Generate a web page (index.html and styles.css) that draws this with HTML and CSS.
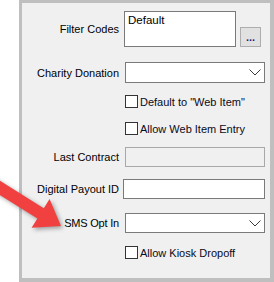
FILE: index.html
```html
<!DOCTYPE html>
<html>
<head>
<meta charset="utf-8">
<link rel="stylesheet" href="styles.css">
</head>
<body>
<div class="panel">
  <div class="form">
    <div class="row r1">
      <span class="lbl">Filter Codes</span>
      <div class="field filter-field">
        <div class="textarea">Default</div>
        <button class="ellipsis">...</button>
      </div>
    </div>
    <div class="row r2">
      <span class="lbl">Charity Donation</span>
      <div class="field combo"><svg class="chev" width="12" height="7" viewBox="0 0 12 7"><polyline points="0.5,0.5 6,6 11.5,0.5" fill="none" stroke="#3a3a3a" stroke-width="1"/></svg></div>
    </div>
    <div class="row r3">
      <span class="lbl"></span>
      <div class="check"><span class="box"></span><span class="ctext">Default to "Web Item"</span></div>
    </div>
    <div class="row r4">
      <span class="lbl"></span>
      <div class="check"><span class="box"></span><span class="ctext">Allow Web Item Entry</span></div>
    </div>
    <div class="row r5">
      <span class="lbl">Last Contract</span>
      <div class="field input disabled"></div>
    </div>
    <div class="row r6">
      <span class="lbl">Digital Payout ID</span>
      <div class="field input wide"></div>
    </div>
    <div class="row r7">
      <span class="lbl sms-lbl">SMS Opt In</span>
      <div class="field combo sms"><svg class="chev" width="12" height="7" viewBox="0 0 12 7"><polyline points="0.5,0.5 6,6 11.5,0.5" fill="none" stroke="#3a3a3a" stroke-width="1"/></svg></div>
    </div>
    <div class="row r8">
      <span class="lbl"></span>
      <div class="check"><span class="box"></span><span class="ctext">Allow Kiosk Dropoff</span></div>
    </div>
  </div>
</div>
<svg class="arrow" width="90" height="80" viewBox="0 0 90 80">
  <polygon points="-4.8,12.8 43.8,43.2 49.6,33.9 61,61 31.6,62.7 37.4,53.4 -11.2,23" fill="#f0403f"/>
</svg>
</body>
</html>
```
FILE: styles.css
```css
html, body {
  margin: 0;
  padding: 0;
  background: #ffffff;
}
body {
  width: 274px;
  height: 282px;
  overflow: hidden;
  position: relative;
  font-family: "Liberation Sans", Arial, sans-serif;
  font-size: 11px;
  color: #000;
}
.panel {
  margin-left: 19px;
  width: 248px;
  height: 275px;
  background: #f0f0f0;
  border-style: solid;
  border-color: #bfbfbf;
  border-width: 3px 4px 4px 3px;
}
.form {
  padding-top: 8px;
  display: flex;
  flex-direction: column;
}
.row {
  display: grid;
  grid-template-columns: 97px 140px;
  column-gap: 6px;
  align-items: center;
}
.lbl {
  text-align: right;
  white-space: nowrap;
}
.sms-lbl {
  letter-spacing: -0.2px;
}
.r1 { height: 36px; }
.r2 { height: 21px; margin-top: 15px; }
.r3 { height: 13px; margin-top: 12px; }
.r4 { height: 13px; margin-top: 14px; }
.r5 { height: 20px; margin-top: 12px; }
.r6 { height: 20px; margin-top: 12px; }
.r7 { height: 20px; margin-top: 14px; }
.r8 { height: 13px; margin-top: 13px; }

.filter-field {
  display: flex;
  height: 36px;
  margin-left: -1px;
}
.textarea {
  box-sizing: border-box;
  width: 112px;
  height: 36px;
  background: #fff;
  border: 1px solid #7a7a7a;
  padding: 2px 3px;
  line-height: 13px;
  font-size: 11.5px;
}
.ellipsis {
  align-self: flex-end;
  box-sizing: border-box;
  width: 21px;
  height: 20px;
  margin-left: 4px;
  padding: 0 0 3px 0;
  background: #e1e1e1;
  border: 1px solid #adadad;
  font-family: "Liberation Sans", Arial, sans-serif;
  font-size: 11px;
  font-weight: bold;
  color: #2a1f7a;
  line-height: 12px;
  display: flex;
  align-items: flex-end;
  justify-content: center;
}
.combo {
  box-sizing: border-box;
  height: 21px;
  background: #fff;
  border: 1px solid #7a7a7a;
  display: flex;
  align-items: center;
  justify-content: flex-end;
  padding-right: 3px;
}
.combo.sms { height: 20px; }
.chev { display: block; }
.input {
  box-sizing: border-box;
  height: 20px;
  background: #fff;
  border: 1px solid #7a7a7a;
}
.input.disabled {
  background: #f0f0f0;
  border-color: #a8a8a8;
}
.input.wide {
  margin-left: -2px;
}
.check {
  display: flex;
  align-items: center;
  gap: 2px;
  height: 13px;
}
.box {
  box-sizing: border-box;
  width: 13px;
  height: 13px;
  background: #fff;
  border: 1px solid #333;
  flex: none;
}
.ctext {
  white-space: nowrap;
  color: #0a0a20;
}
.arrow {
  position: absolute;
  left: 0;
  top: 165px;
  overflow: visible;
  filter: drop-shadow(2px 2px 2px rgba(0, 0, 0, 0.35));
}
```
